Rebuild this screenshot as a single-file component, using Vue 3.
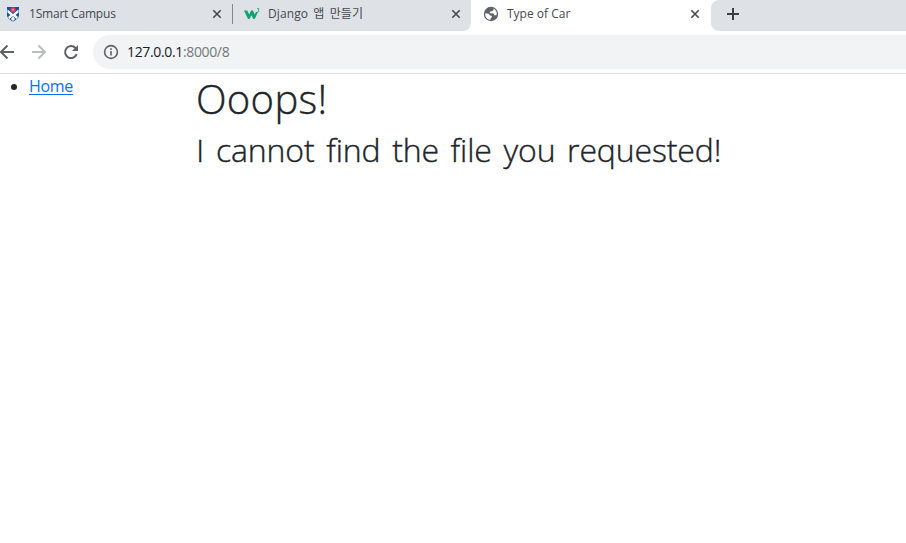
<script setup>
const tabs = [
  { id: 'campus', title: '1Smart Campus' },
  { id: 'django', title: 'Django 앱 만들기' },
  { id: 'car', title: 'Type of Car', active: true },
]
</script>

<template>
  <div class="browser">
    <div class="tabs">
      <div v-for="tab in tabs" :key="tab.id" class="tab" :class="[tab.id, { active: tab.active }]">
        <svg v-if="tab.id === 'campus'" class="favicon" viewBox="0 0 16 16">
          <path d="M2 1h12v8c0 3-3 5-6 6.500C5 14 2 12 2 9z" fill="#1451a0" />
          <path d="M2.500 3.500L8 8l5.500-4.500v3L10.500 9l2.500 2-1.500 2L8 10l-3.500 3L3 11l2.500-2-3-2.500z" fill="#fff" />
          <path d="M8 10l2 3.200L8 15l-2-1.800z" fill="#fff" />
          <circle cx="8" cy="3.800" r="2.600" fill="#e34657" />
          <circle cx="8" cy="3.800" r=".8" fill="#f3b5bd" />
        </svg>
        <svg v-else-if="tab.id === 'django'" class="favicon" viewBox="0 0 16 16">
          <path d="M0 4.500h3.200l2 4 1.800-4h2l1.800 4 1.200-2.500h2L10.700 13H9.300L7.400 9.300 5.500 13H4z" fill="#10a36f" />
          <path d="M13 2.700h2l-1 1.300c1.600 0 1.500 2.200-.8 2" fill="none" stroke="#2bac7f" stroke-width=".9" />
        </svg>
        <svg v-else class="favicon" viewBox="0 0 16 16">
          <circle cx="8" cy="8" r="7.200" fill="#5f6368" />
          <path d="M2.200 7.200L5.500 7.700l2 2h1.300v1.600L7.500 12.600v1.200C4.500 13.500 1.800 11.200 2.200 7.200zM8.400 2.200L10.500 2.800v1.400L9 5.300 6.800 5.800v1.500h3.300l1.300 2h2.100C14.700 5.800 12 2.200 8.400 2.200z" fill="#fff" />
        </svg>
        <span class="title">{{ tab.title }}</span>
        <svg class="close" viewBox="0 0 10 10"><path d="M1.300 1.300l7.400 7.400M8.700 1.300L1.300 8.700" /></svg>
      </div>
      <div class="rest">
        <svg class="plus" viewBox="0 0 12 12"><path d="M6 0v12M0 6h12" /></svg>
      </div>
    </div>
    <div class="toolbar">
      <svg class="nav back" viewBox="0 0 16 16"><path d="M15 8H2M8.500 1.500L2 8l6.500 6.500" /></svg>
      <svg class="nav forward" viewBox="0 0 16 16"><path d="M1 8h13M7.500 1.500L14 8l-6.500 6.500" /></svg>
      <svg class="nav reload" viewBox="0 0 16 16">
        <path d="M13.700 10.200A6 6 0 1 1 12.500 4L14 5.500" />
        <path class="tip" d="M15 1v6H9z" />
      </svg>
      <div class="address">
        <svg class="info" viewBox="0 0 16 16">
          <circle cx="8" cy="8" r="6.400" /><path d="M8 7v4.500M8 4.200V6" />
        </svg>
        <span class="url"><b>127.0.0.1</b>:8000/8</span>
      </div>
    </div>
    <main class="page">
      <ul class="menu"><li><a href="#">Home</a></li></ul>
      <section class="message">
        <h1>Ooops!</h1>
        <h2><span class="plain">I</span> cannot find the file you requested!</h2>
      </section>
    </main>
  </div>
</template>

<style>
body { margin: 0; background: #fff; }
</style>

<style scoped>
* { box-sizing: border-box; }
.browser { width: 906px; height: 543px; overflow: hidden; background: #fff; font-family: "Open Sans", "Noto Sans CJK KR", sans-serif; }
.tabs { display: flex; height: 31px; background: #fff; }
.tab { display: flex; align-items: center; height: 31px; padding: 0 10px 4px 5px; background: #dee1e6; color: #45494d; font-size: 12px; }
.campus { width: 232px; }
.campus .title { letter-spacing: -.2px; }
.django { width: 239px; padding: 0 10px 4px 12px; border-radius: 0 0 8px 0; position: relative; }
.django .title { letter-spacing: .1px; word-spacing: 2px; }
.django::before { content: ""; position: absolute; left: 0; top: 4px; width: 1px; height: 20px; background: #85888c; }
.car { width: 240px; padding: 0 11px 4px 12px; background: #fff; }
.favicon { width: 16px; height: 16px; flex: none; }
.title { margin-left: 8px; line-height: 18px; white-space: nowrap; }
.close { width: 10px; height: 10px; margin-left: auto; fill: none; stroke: #45494d; stroke-width: 1.6; }
.rest { flex: 1; padding: 8px 0 0 16px; background: #dee1e6; border-radius: 8px 0 0 8px; }
.plus { display: block; width: 12px; height: 12px; fill: none; stroke: #3c4043; stroke-width: 2; }
.toolbar { display: flex; align-items: center; height: 43px; padding-bottom: 1px; border-bottom: 1px solid #dadce0; }
.nav { width: 16px; height: 16px; flex: none; fill: none; stroke: #5f6368; stroke-width: 2; }
.back { margin-left: -1px; }
.forward { margin-left: 16px; stroke: #babcbe; }
.reload { margin-left: 16px; }
.tip { fill: #5f6368; stroke: none; }
.address { display: flex; flex: 1; align-items: center; height: 34px; margin-left: 14px; padding-left: 10px; border-radius: 17px 0 0 17px; background: #f1f3f4; }
.info { width: 16px; height: 16px; fill: none; stroke: #5f6368; stroke-width: 1.6; }
.url { margin-left: 8px; font-size: 14px; color: #74787c; letter-spacing: -.35px; }
.url b { color: #202124; font-weight: 400; }
.page { display: flex; color: #212529; }
.menu { width: 196px; margin: 0; padding: 0 0 0 29px; font-size: 16px; line-height: 24px; letter-spacing: -.3px; }
.menu a { color: #0d6efd; text-underline-offset: 2px; }
.message { white-space: nowrap; }
h1, h2 { margin: 0; font-weight: 300; -webkit-text-stroke: .4px #212529; }
h1 { font-size: 40px; line-height: 48px; padding-top: 1px; letter-spacing: .3px; }
h2 { margin-top: 8px; font-size: 32px; line-height: 38px; letter-spacing: -.13px; word-spacing: 3.500px; }
.plain { font-family: Lato, sans-serif; }
</style>
